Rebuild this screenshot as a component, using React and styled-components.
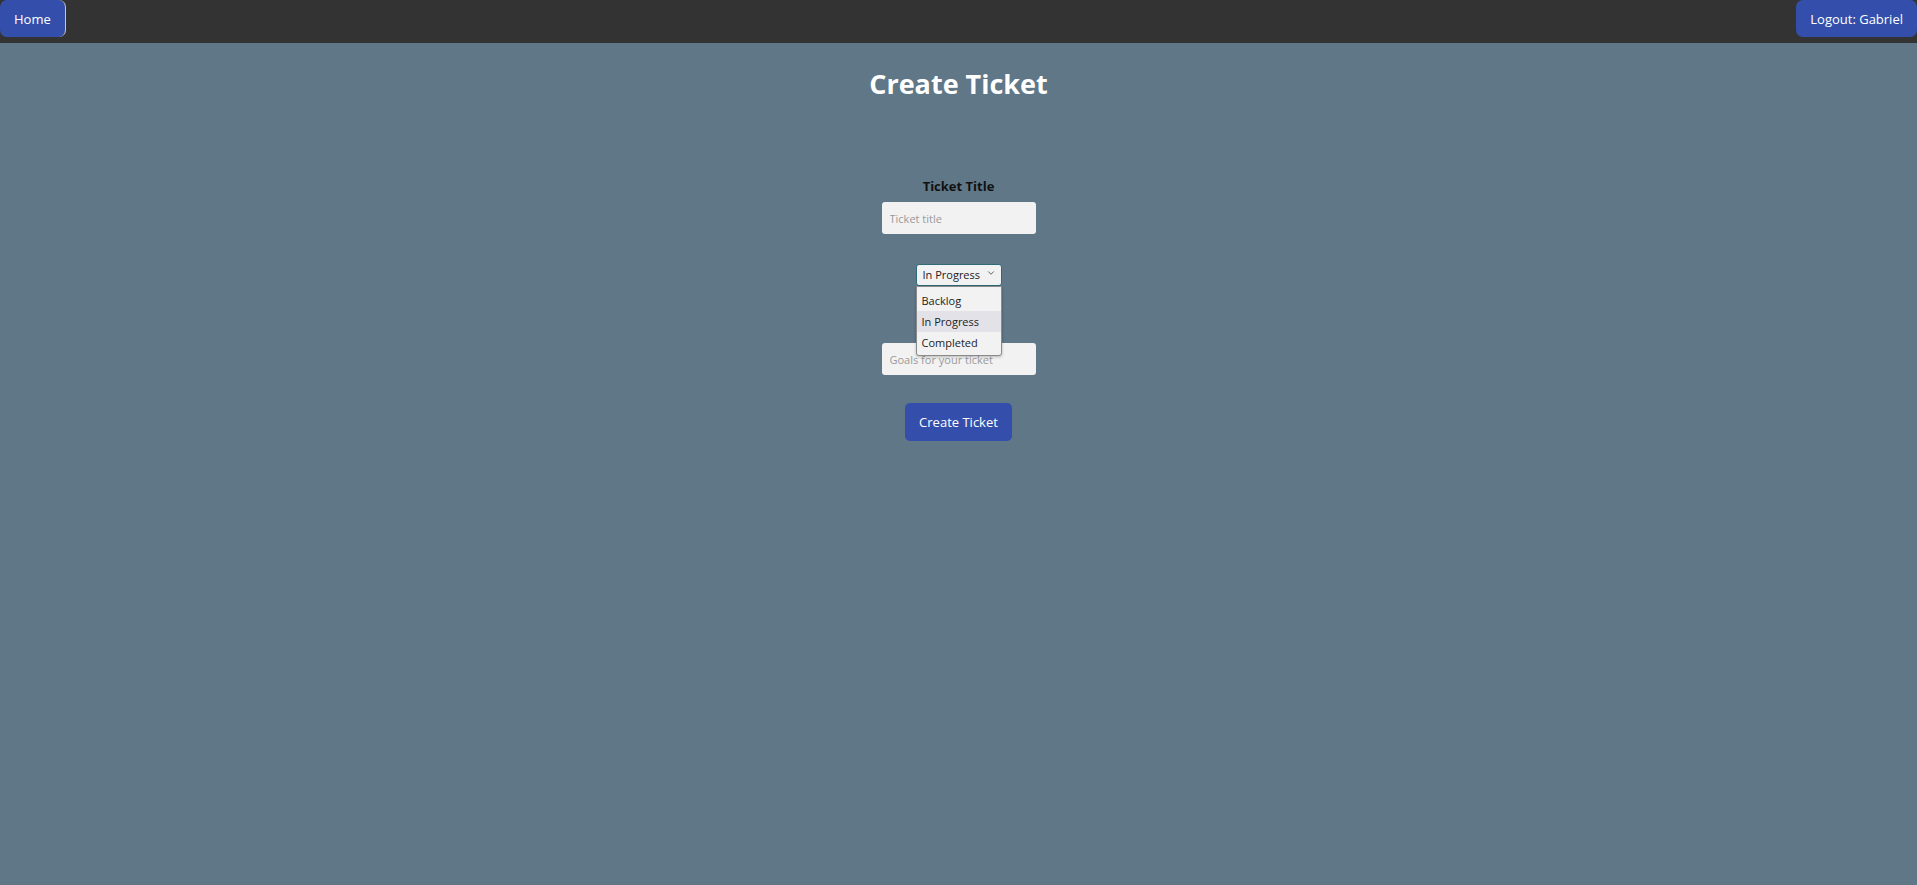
import React, { useState } from 'react'
import styled, { createGlobalStyle } from 'styled-components'
import { ChevronDown } from 'lucide-react'

const GlobalStyle = createGlobalStyle`
   body {
      margin: 0;
      background: #607787;
      font-family: 'Open Sans', 'Noto Sans', sans-serif;
   }
`

const STATUSES = ['Backlog', 'In Progress', 'Completed']

function App() {
   const [status, setStatus] = useState('In Progress')

   return (
      <>
         <GlobalStyle />
         <Nav>
            <NavButton $divider>Home</NavButton>
            <NavButton>Logout: Gabriel</NavButton>
         </Nav>
         <Main>
            <Title>Create Ticket</Title>
            <Form onSubmit={(e) => e.preventDefault()}>
               <Label htmlFor="ticketTitle">Ticket Title</Label>
               <Input id="ticketTitle" placeholder="Ticket title" />
               <SelectWrap>
                  <Select
                     value={status}
                     onChange={(e) => setStatus(e.target.value)}
                  >
                     {STATUSES.map((s) => (
                        <option key={s} value={s}>
                           {s}
                        </option>
                     ))}
                  </Select>
                  <Chevron size={10} strokeWidth={2.2} />
                  <Options>
                     {STATUSES.map((s) => (
                        <Option
                           key={s}
                           $active={s === status}
                           onClick={() => setStatus(s)}
                        >
                           {s}
                        </Option>
                     ))}
                  </Options>
               </SelectWrap>
               <Input $top="57px" placeholder="Goals for your ticket" />
               <SubmitButton type="submit">Create Ticket</SubmitButton>
            </Form>
         </Main>
      </>
   )
}

export default App

const Nav = styled.nav`
   height: 43px;
   background: #333333;
   display: flex;
   justify-content: space-between;
   align-items: flex-start;
`
const NavButton = styled.button`
   height: 37px;
   padding: 0 14px;
   border: none;
   border-right: ${(p) => (p.$divider ? '1px solid #c8c8c8' : 'none')};
   border-radius: 7px;
   background: #344fab;
   color: #ffffff;
   font-family: inherit;
   font-size: 13px;
   cursor: pointer;
`
const Main = styled.main`
   display: flex;
   flex-direction: column;
   align-items: center;
`
const Title = styled.h1`
   margin: 23px 0 0;
   font-size: 27px;
   line-height: 36px;
   font-weight: 700;
   color: #ffffff;
`
const Form = styled.form`
   margin-top: 75px;
   display: flex;
   flex-direction: column;
   align-items: center;
`
const Label = styled.label`
   font-size: 13px;
   line-height: 19px;
   font-weight: 700;
   color: #111111;
`
const Input = styled.input`
   box-sizing: border-box;
   width: 154px;
   height: 32px;
   margin-top: ${(p) => p.$top || '6px'};
   padding: 0 8px;
   border: none;
   border-radius: 3px;
   background: #f2f2f2;
   font-family: inherit;
   font-size: 11px;
   color: #222222;
   &::placeholder {
      color: #9a9a9a;
   }
   &:focus {
      outline: none;
   }
`
const SelectWrap = styled.div`
   position: relative;
   margin-top: 28px;
   width: 86px;
   height: 22px;
   margin-bottom: 2px;
`
const Select = styled.select`
   box-sizing: border-box;
   width: 100%;
   height: 100%;
   padding: 0 0 0 6px;
   border: 1px solid #2f6a78;
   border-radius: 3px;
   background: #f2f2f2;
   font-family: inherit;
   font-size: 11px;
   color: #222222;
   appearance: none;
   outline: none;
`
const Chevron = styled(ChevronDown)`
   position: absolute;
   right: 6px;
   top: 6px;
   color: #555555;
   pointer-events: none;
`
const Options = styled.ul`
   position: absolute;
   top: 24px;
   left: 0;
   z-index: 2;
   box-sizing: border-box;
   width: 86px;
   margin: 0;
   padding: 3px 0 2px;
   list-style: none;
   border: 1px solid #8a8a8a;
   border-radius: 0 0 3px 3px;
   background: #f2f2f2;
   box-shadow: 0 1px 3px rgba(0, 0, 0, 0.25);
`
const Option = styled.li`
   height: 21px;
   padding-left: 5px;
   font-size: 11px;
   line-height: 21px;
   color: #222222;
   background: ${(p) => (p.$active ? '#e2e2e8' : 'transparent')};
   cursor: default;
`
const SubmitButton = styled.button`
   margin-top: 28px;
   height: 38px;
   padding: 0 14px;
   border: none;
   border-radius: 5px;
   background: #344fab;
   color: #ffffff;
   font-family: inherit;
   font-size: 13px;
   cursor: pointer;
`
